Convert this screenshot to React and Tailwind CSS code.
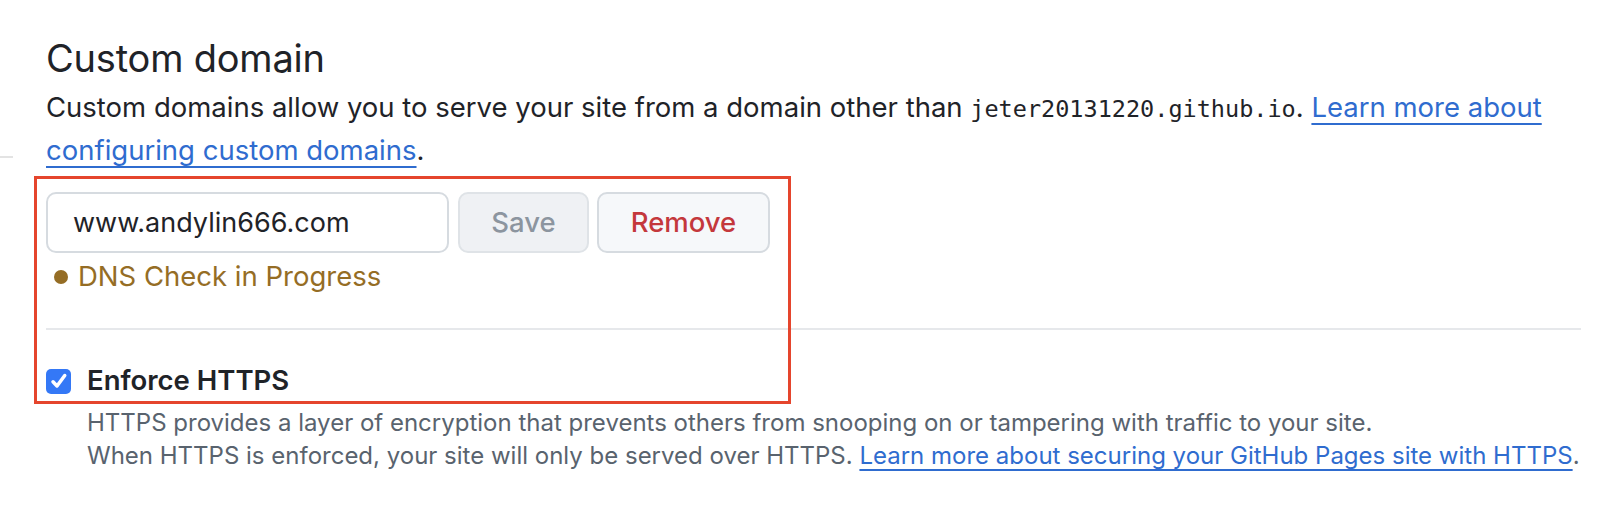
import React, { useState } from 'react';

const CustomDomainSettings = () => {
  const [domain, setDomain] = useState('www.andylin666.com');
  const [enforceHttps, setEnforceHttps] = useState(true);

  return (
    <div className="relative w-[1618px] h-[532px] overflow-hidden bg-white text-[#1f2328] font-['Inter','Noto_Sans',sans-serif]">
      {/* faint edge of the layout behind */}
      <div className="absolute left-0 top-[156px] h-[2px] w-[13px] bg-[#e3e3e3]" />

      <main className="pl-[46px] pt-[35px] pr-[37px]">
        {/* Title */}
        <h2 className="text-[38px] leading-[46px] font-normal tracking-[-0.2px]">Custom domain</h2>

        <p className="mt-[5px] text-[27.5px] leading-[43px]">
          Custom domains allow you to serve your site from a domain other than{' '}
          <code className="font-['DejaVu_Sans_Mono','Liberation_Mono',monospace] text-[23.5px] leading-none">jeter20131220.github.io</code>.{' '}
          <a href="#" className="text-[#2f6ccf] underline decoration-2 underline-offset-[6px]">
            Learn more about configuring custom domains
          </a>
          .
        </p>

        {/* Domain form */}
        <div className="mt-[20px] flex items-center gap-[8px]">
          <input
            value={domain}
            onChange={(e) => setDomain(e.target.value)}
            className="w-[403px] h-[61px] px-[25px] rounded-[10px] border-2 border-[#d6dbe0] text-[27px] text-[#1f2328] outline-none"
          />
          <button className="ml-[1px] w-[131px] h-[61px] rounded-[10px] border-2 border-[#dfe3e7] bg-[#eff1f4] text-[27.5px] font-medium text-[#8c959f]">
            Save
          </button>
          <button className="w-[173px] h-[61px] rounded-[10px] border-2 border-[#d6dbe0] bg-[#f6f8fa] text-[27.5px] font-medium text-[#c4383c]">
            Remove
          </button>
        </div>

        <div className="mt-[7px] ml-[8px] flex items-center gap-[10px] h-[34px] text-[27.5px] text-[#956d25]">
          <span className="w-[14px] h-[14px] rounded-full bg-[#956d25]" />
          <span>DNS Check in Progress</span>
        </div>

        <div className="mt-[34px] h-[2px] bg-[#e6e8eb]" />

        {/* Enforce HTTPS */}
        <label className="mt-[36px] flex items-center gap-[16px] h-[30px] cursor-pointer">
          <span
            onClick={() => setEnforceHttps(!enforceHttps)}
            className="w-[25px] h-[25px] rounded-[5px] bg-[#3478f6] flex items-center justify-center"
          >
            {enforceHttps && (
              <svg viewBox="0 0 16 16" className="w-[20px] h-[20px]" fill="none" stroke="white" strokeWidth="2.8" strokeLinecap="round" strokeLinejoin="round">
                <path d="M3.2 8.6 L6.4 12 L12.6 3.6" />
              </svg>
            )}
          </span>
          <span className="text-[27.5px] font-semibold">Enforce HTTPS</span>
        </label>

        <div className="mt-[10px] pl-[41px] text-[24px] leading-[33px] text-[#59636e] whitespace-nowrap">
          <p>HTTPS provides a layer of encryption that prevents others from snooping on or tampering with traffic to your site.</p>
          <p>
            When HTTPS is enforced, your site will only be served over HTTPS.{' '}
            <a href="#" className="text-[#2f6ccf] underline decoration-2 underline-offset-[5px]">
              Learn more about securing your GitHub Pages site with HTTPS
            </a>
            .
          </p>
        </div>
      </main>

      {/* annotation frame drawn over the form */}
      <div className="absolute left-[34px] top-[176px] w-[757px] h-[228px] border-[3px] border-[#e5452d] pointer-events-none" />
    </div>
  );
};

export default CustomDomainSettings;
